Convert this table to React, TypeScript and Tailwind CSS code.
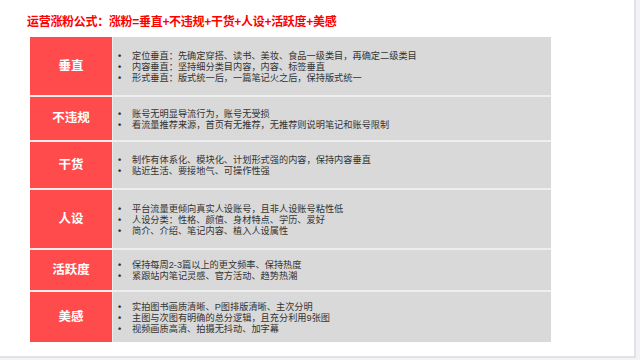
import React from 'react';

interface FormulaRow {
  label: string;
  height: string;
  items: string[];
}

const rows: FormulaRow[] = [
  {
    label: '垂直',
    height: 'h-[58px]',
    items: [
      '定位垂直：先确定穿搭、读书、美妆、食品一级类目，再确定二级类目',
      '内容垂直：坚持细分类目内容，内容、标签垂直',
      '形式垂直：版式统一后，一篇笔记火之后，保持版式统一',
    ],
  },
  {
    label: '不违规',
    height: 'h-[43px]',
    items: ['账号无明显导流行为，账号无受损', '看流量推荐来源，首页有无推荐，无推荐则说明笔记和账号限制'],
  },
  {
    label: '干货',
    height: 'h-[46px]',
    items: ['制作有体系化、模块化、计划形式强的内容，保持内容垂直', '贴近生活、要接地气、可操作性强'],
  },
  {
    label: '人设',
    height: 'h-[58px]',
    items: [
      '平台流量更倾向真实人设账号，且非人设账号粘性低',
      '人设分类：性格、颜值、身材特点、学历、爱好',
      '简介、介绍、笔记内容、植入人设属性',
    ],
  },
  {
    label: '活跃度',
    height: 'h-[40px]',
    items: ['保持每周2-3篇以上的更文频率、保持热度', '紧跟站内笔记灵感、官方活动、趋势热潮'],
  },
  {
    label: '美感',
    height: 'h-[50px]',
    items: [
      '实拍图书画质清晰、P图排版清晰、主次分明',
      '主图与次图有明确的总分逻辑，且充分利用9张图',
      '视频画质高清、拍摄无抖动、加字幕',
    ],
  },
];

const App = () => {
  return (
    <div
      className="w-[640px] h-[360px] bg-[#f3f3f5] overflow-hidden"
      style={{ fontFamily: '"Liberation Sans", "Noto Sans CJK SC", sans-serif' }}
    >
      <div className="w-[636px] h-[358px] bg-white border-r-2 border-b-2 border-[#e2e2e6] pt-[14px] pl-[27px]">
        <h1 className="text-[12px] leading-[16px] font-bold text-[#f00] tracking-[-0.3px]">
          运营涨粉公式：涨粉=垂直+不违规+干货+人设+活跃度+美感
        </h1>

        <div className="mt-[7px] ml-[3px] w-[521px] flex flex-col gap-[2px] bg-[#eeeeee]">
          {rows.map((row) => (
            <div key={row.label} className={`flex gap-px ${row.height}`}>
              <div className="w-[82px] bg-[#ff4b4b] flex items-center justify-center text-white font-bold text-[12.5px]">
                {row.label}
              </div>
              <div className="flex-1 bg-[#d9d9d9] flex flex-col justify-center pl-[5px] pt-[2px]">
                {row.items.map((item) => (
                  <div key={item} className="flex text-[9.2px] leading-[11px] text-[#333]">
                    <span className="w-[14px] font-bold">•</span>
                    <span>{item}</span>
                  </div>
                ))}
              </div>
            </div>
          ))}
        </div>
      </div>
    </div>
  );
};

export default App;
